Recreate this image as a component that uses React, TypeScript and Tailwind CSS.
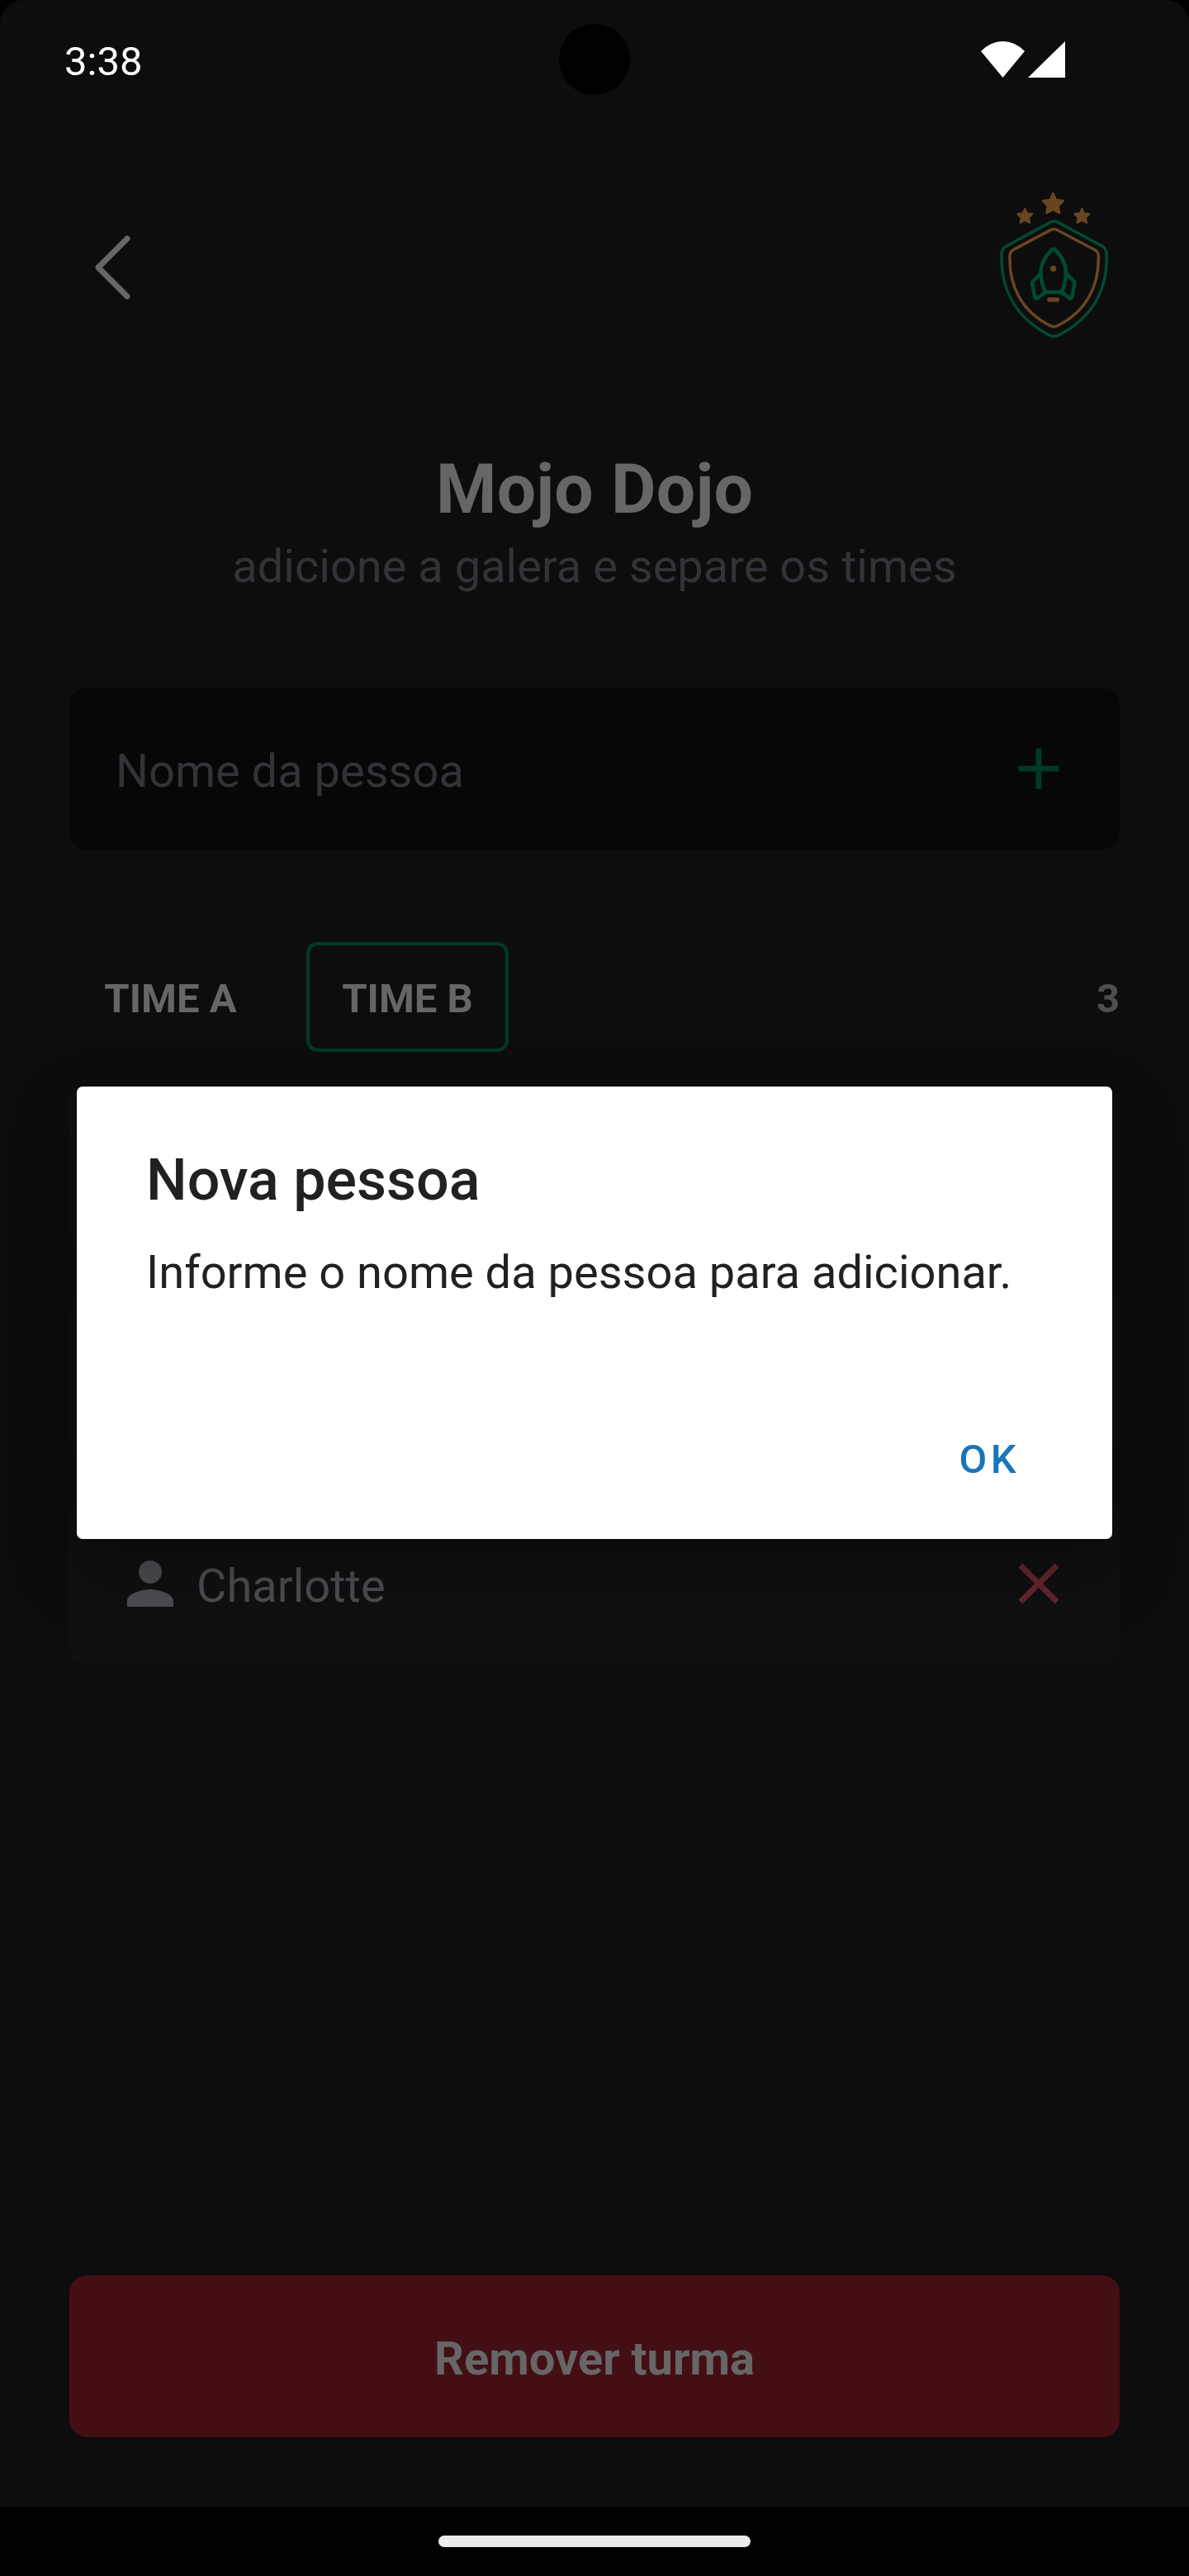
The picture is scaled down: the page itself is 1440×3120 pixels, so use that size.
import type { ReactNode } from 'react';

function MaterialIcon({ d, className }: { d: string; className: string }) {
  return (
    <svg viewBox="0 0 24 24" className={`size-[84px] shrink-0 ${className}`} fill="currentColor">
      <path d={d} />
    </svg>
  );
}

const CLOSE = 'M19 6.41 17.59 5 12 10.59 6.41 5 5 6.41 10.59 12 5 17.59 6.41 19 12 13.41 17.59 19 19 17.59 13.41 12z';
const PERSON = 'M12 12c2.21 0 4-1.79 4-4s-1.79-4-4-4-4 1.79-4 4 1.79 4 4 4zm0 2c-2.67 0-8 1.34-8 4v2h16v-2c0-2.66-5.33-4-8-4z';
const ADD = 'M19 13h-6v6h-2v-6H5v-2h6V5h2v6h6v2z';
const STAR = 'M0-36 L10-13 L36-10 L18 8 L23 33 L0 21 L-23 33 L-18 8 L-36-10 L-10-13 Z';

function Crest() {
  return (
    <svg viewBox="48 51 480 582" className="h-[194px] w-[160px]" fill="none" strokeLinejoin="round" strokeLinecap="round">
      <g fill="#684620" stroke="#684620" strokeWidth="9">
        <path d={STAR} transform="translate(286 110)" />
        <path d={STAR} transform="translate(184 155) scale(.74)" />
        <path d={STAR} transform="translate(391 155) scale(.74)" />
      </g>
      <path
        d="M275 178Q290 170 305 178L464 264Q481 274 481 295C484 415 435 522 306 588Q290 596 273 588C145 522 96 415 99 295Q99 274 117 264Z"
        stroke="#004b31"
        strokeWidth="10.500"
      />
      <path
        d="M277 206Q289 199 302 206L440 279Q451 286 451 301C453 405 411 500 303 553Q289 561 275 553C168 500 126 405 129 301Q129 286 141 278Z"
        stroke="#684620"
        strokeWidth="10.500"
      />
      <g stroke="#004b31" strokeWidth="13.500">
        <path d="M281 278Q287 272 294 278C340 324 342 370 318 431H258C232 370 234 324 281 278Z" />
        <path d="M238 366 210 396 220 449Q223 458 231 453L258 431" />
        <path d="M337 366 365 396 355 449Q352 458 344 453L318 431" />
      </g>
      <circle cx="287" cy="346" r="11" fill="#684620" />
      <rect x="265" y="451" width="44" height="16" rx="7" fill="#684620" />
    </svg>
  );
}

function StatusBar() {
  return (
    <div className="relative flex h-[144px] items-center justify-between pr-[150px] pl-[78px] text-[49px] leading-none text-white">
      <span className="mt-[5px]">3:38</span>
      <div className="absolute top-[29px] left-[677px] size-[86px] rounded-full bg-black" />
      <div className="flex gap-[4px]">
        <svg viewBox="0 0 53 44" className="h-[44px] w-[53px]">
          <path d="M0 12Q12 0 26.500 0Q41 0 53 12L26.500 44Z" fill="white" />
        </svg>
        <svg viewBox="0 0 45 44" className="h-[44px] w-[45px]">
          <path d="M45 0V44H0Z" fill="white" />
        </svg>
      </div>
    </div>
  );
}

function Tab({ children, active = false }: { children: ReactNode; active?: boolean }) {
  return (
    <div
      className={`flex h-[133px] w-[245px] items-center justify-center rounded-[14px] border-[4px] pt-[5px] text-[49px] font-bold text-[#666666] ${active ? 'border-[#003926]' : 'border-transparent'}`}
    >
      {children}
    </div>
  );
}

function PlayerCard({ name }: { name?: string }) {
  return (
    <div className="flex h-[196px] items-center rounded-[21px] bg-[#101012] px-[56px] text-[56px]">
      <MaterialIcon d={PERSON} className="text-[#4e4e52]" />
      <span className="ml-[14px] flex-1 pt-[6px] text-[#4e4e52]">{name}</span>
      <MaterialIcon d={CLOSE} className="text-[#66252b]" />
    </div>
  );
}

function Dialog() {
  return (
    <div className="absolute top-[1316px] left-[93px] flex h-[548px] w-[1254px] flex-col rounded-[7px] bg-white px-[84px] text-[#212121] shadow-[0_36px_84px_rgba(0,0,0,0.3)]">
      <h2 className="mt-[72px] text-[70px] leading-[82px] font-medium">Nova pessoa</h2>
      <p className="mt-[38px] text-[56px] leading-[66px] whitespace-nowrap">Informe o nome da pessoa para adicionar.</p>
      <button className="mt-[165px] mr-[28px] self-end text-[49px] leading-[58px] font-medium tracking-[0.0892em] text-[#1976b8]">OK</button>
    </div>
  );
}

export default function App() {
  return (
    <div className="relative flex h-[3120px] w-[1440px] flex-col overflow-hidden bg-black font-['Roboto',sans-serif]">
      <div className="flex h-[3036px] flex-col rounded-t-[28px] bg-[#0d0d0d]">
        <StatusBar />
        <header className="mt-[83px] flex h-[194px] items-center justify-between px-[84px]">
          <svg viewBox="0 0 256 256" className="size-[112px]" fill="none" stroke="#666666" strokeWidth="16" strokeLinecap="round" strokeLinejoin="round">
            <path d="M160 208 80 128 160 48" />
          </svg>
          <Crest />
        </header>
        <div className="mt-[123px] text-center">
          <h1 className="text-[84px] leading-[98px] font-bold tracking-[0.2px] text-[#666666]">Mojo Dojo</h1>
          <p className="mt-[6px] text-[56px] leading-[76px] text-[#323238]">adicione a galera e separe os times</p>
        </div>
        <main className="mt-[109px] flex flex-1 flex-col px-[84px]">
          <div className="flex h-[196px] shrink-0 items-center justify-between rounded-[21px] bg-[#070707] px-[56px] text-[56px] text-[#323238]">
            <span className="pt-[6px]">Nome da pessoa</span>
            <MaterialIcon d={ADD} className="text-[#003926]" />
          </div>
          <div className="mt-[112px] flex items-center">
            <div className="flex flex-1 gap-[42px]">
              <Tab>TIME A</Tab>
              <Tab active>TIME B</Tab>
            </div>
            <span className="pt-[5px] text-[49px] font-bold text-[#4e4e52]">3</span>
          </div>
          <div className="mt-[42px] flex flex-col gap-[56px]">
            <PlayerCard />
            <PlayerCard />
            <PlayerCard name="Charlotte" />
          </div>
          <button className="mt-auto mb-[84px] h-[196px] rounded-[21px] bg-[#440f14] pt-[6px] text-[56px] font-bold text-[#666666]">Remover turma</button>
        </main>
      </div>
      <div className="flex h-[84px] items-center justify-center">
        <div className="h-[14px] w-[378px] rounded-full bg-[#ebebeb]" />
      </div>
      <Dialog />
    </div>
  );
}
